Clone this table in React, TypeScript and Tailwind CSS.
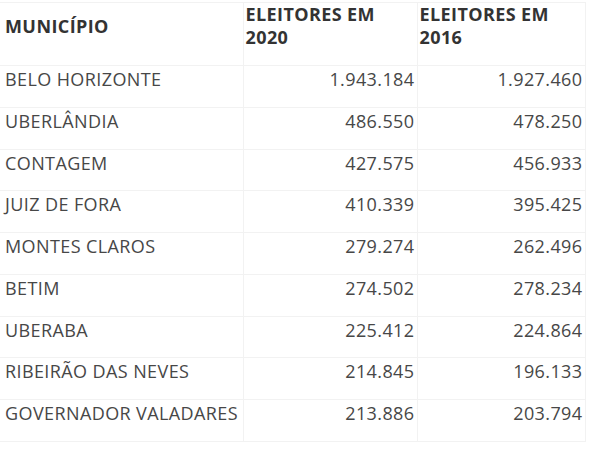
const ROWS: [string, string, string][] = [
  ['BELO HORIZONTE', '1.943.184', '1.927.460'],
  ['UBERLÂNDIA', '486.550', '478.250'],
  ['CONTAGEM', '427.575', '456.933'],
  ['JUIZ DE FORA', '410.339', '395.425'],
  ['MONTES CLAROS', '279.274', '262.496'],
  ['BETIM', '274.502', '278.234'],
  ['UBERABA', '225.412', '224.864'],
  ['RIBEIRÃO DAS NEVES', '214.845', '196.133'],
  ['GOVERNADOR VALADARES', '213.886', '203.794'],
];

export default function App() {
  return (
    <div className="w-[600px] h-[450px] bg-white overflow-hidden pt-[2px] font-['Open_Sans',sans-serif] text-[18px] leading-[23px] tracking-[0.4px] text-[#474747]">
      <table className="w-[585px] border-collapse table-fixed">
        <colgroup>
          <col className="w-[243px]" />
          <col className="w-[174px]" />
          <col className="w-[168px]" />
        </colgroup>
        <thead>
          <tr className="border-y border-[#f2f2f2]">
            <th className="pl-[5px] pt-0 pb-[16px] text-left align-middle font-bold text-[#333] border-r border-[#f2f2f2]">
              MUNICÍPIO
            </th>
            <th className="pl-[2px] pt-0 pb-[16px] text-left align-top font-bold text-[#333] border-r border-[#f2f2f2]">
              ELEITORES EM
              <br />
              2020
            </th>
            <th className="pl-[2px] pt-0 pb-[16px] text-left align-top font-bold text-[#333] border-r border-[#f2f2f2]">
              ELEITORES EM
              <br />
              2016
            </th>
          </tr>
        </thead>
        <tbody>
          {ROWS.map(([city, y2020, y2016]) => (
            <tr key={city} className="border-b border-[#f2f2f2]">
              <td className="pl-[5px] pt-[2px] pb-[15.75px] align-top whitespace-nowrap border-r border-[#f2f2f2]">
                {city}
              </td>
              <td className="pr-[2px] pt-[2px] pb-[15.75px] align-top text-right border-r border-[#f2f2f2]">
                {y2020}
              </td>
              <td className="pr-[2px] pt-[2px] pb-[15.75px] align-top text-right border-r border-[#f2f2f2]">
                {y2016}
              </td>
            </tr>
          ))}
        </tbody>
      </table>
    </div>
  );
}
